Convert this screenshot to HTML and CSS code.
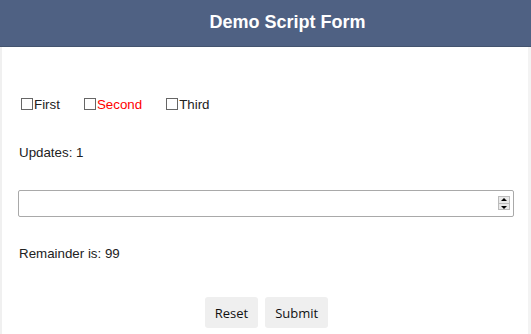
FILE: index.html
```html
<!DOCTYPE html>
<html>
<head lang="en">
    <meta charset="UTF-8">
    <title>Demo Script Form</title>
    <link rel="stylesheet" href="styles.css">
</head>
<body>
<div id="page">
    <div id="header">Demo Script Form</div>
    <form id="form">
        <div class="checks">
            <label class="check"><input type="checkbox"/>First</label>
            <label class="check red"><input type="checkbox"/>Second</label>
            <label class="check"><input type="checkbox"/>Third</label>
        </div>
        <p class="line updates">Updates: 1</p>
        <div class="field">
            <input type="text" class="num"/>
            <span class="spin"><span class="up"></span><span class="down"></span></span>
        </div>
        <p class="line remainder">Remainder is: 99</p>
        <div class="buttons">
            <button type="button">Reset</button>
            <button type="button">Submit</button>
        </div>
    </form>
</div>
</body>
</html>
```

FILE: styles.css
```css
* {
    margin: 0;
    padding: 0;
    box-sizing: border-box;
}

body {
    font-family: "Liberation Sans", Arial, sans-serif;
    font-size: 13.33px;
    color: #222;
    background: #fff;
}

#page {
    height: 334px;
    overflow: hidden;
    box-shadow: inset 2px 0 0 #f0f0f0, inset -3px 0 0 #f3f3f3;
}

#header {
    height: 47px;
    background: #4f6183;
    border-bottom: 1px solid #44546f;
    color: #fff;
    font-size: 18px;
    font-weight: bold;
    line-height: 44px;
    text-align: center;
    padding-left: 44px;
}

#form {
    padding: 0 17px 0 18px;
}

.checks {
    display: flex;
    padding: 49px 0 0 3px;
    height: 65px;
}

.check {
    display: flex;
    align-items: center;
    height: 16px;
    margin-right: 24px;
}

.check.red {
    color: #f00;
}

.check input {
    appearance: none;
    -webkit-appearance: none;
    width: 12px;
    height: 12px;
    border: 1px solid #666;
    background: #fff;
    margin-right: 1px;
}

.line {
    height: 16px;
    line-height: 16px;
    padding-left: 1px;
}

.updates {
    margin-top: 33px;
}

.field {
    position: relative;
    margin-top: 29px;
    height: 27px;
}

.num {
    width: 100%;
    height: 27px;
    border: 1px solid #a9a9a9;
    border-radius: 2px;
}

.spin {
    position: absolute;
    right: 4px;
    top: 6px;
    width: 12px;
    height: 14px;
    border: 1px solid #bbb;
    background: #e9e9e9;
    display: flex;
    flex-direction: column;
}

.spin span {
    flex: 1;
    position: relative;
}

.spin .up {
    border-bottom: 1px solid #bbb;
}

.spin .up:after,
.spin .down:after {
    content: "";
    position: absolute;
    left: 2px;
    border-left: 3px solid transparent;
    border-right: 3px solid transparent;
}

.spin .up:after {
    top: 1px;
    border-bottom: 3px solid #000;
}

.spin .down:after {
    top: 2px;
    border-top: 3px solid #000;
}

.remainder {
    margin-top: 29px;
}

.buttons {
    display: flex;
    justify-content: center;
    gap: 7px;
    margin-top: 35px;
    padding-left: 1px;
}

.buttons button {
    height: 31px;
    padding: 0 10px;
    border: none;
    border-radius: 3px;
    background: #efefef;
    color: #111;
    font-family: "Open Sans", sans-serif;
    font-size: 13px;
}
```
